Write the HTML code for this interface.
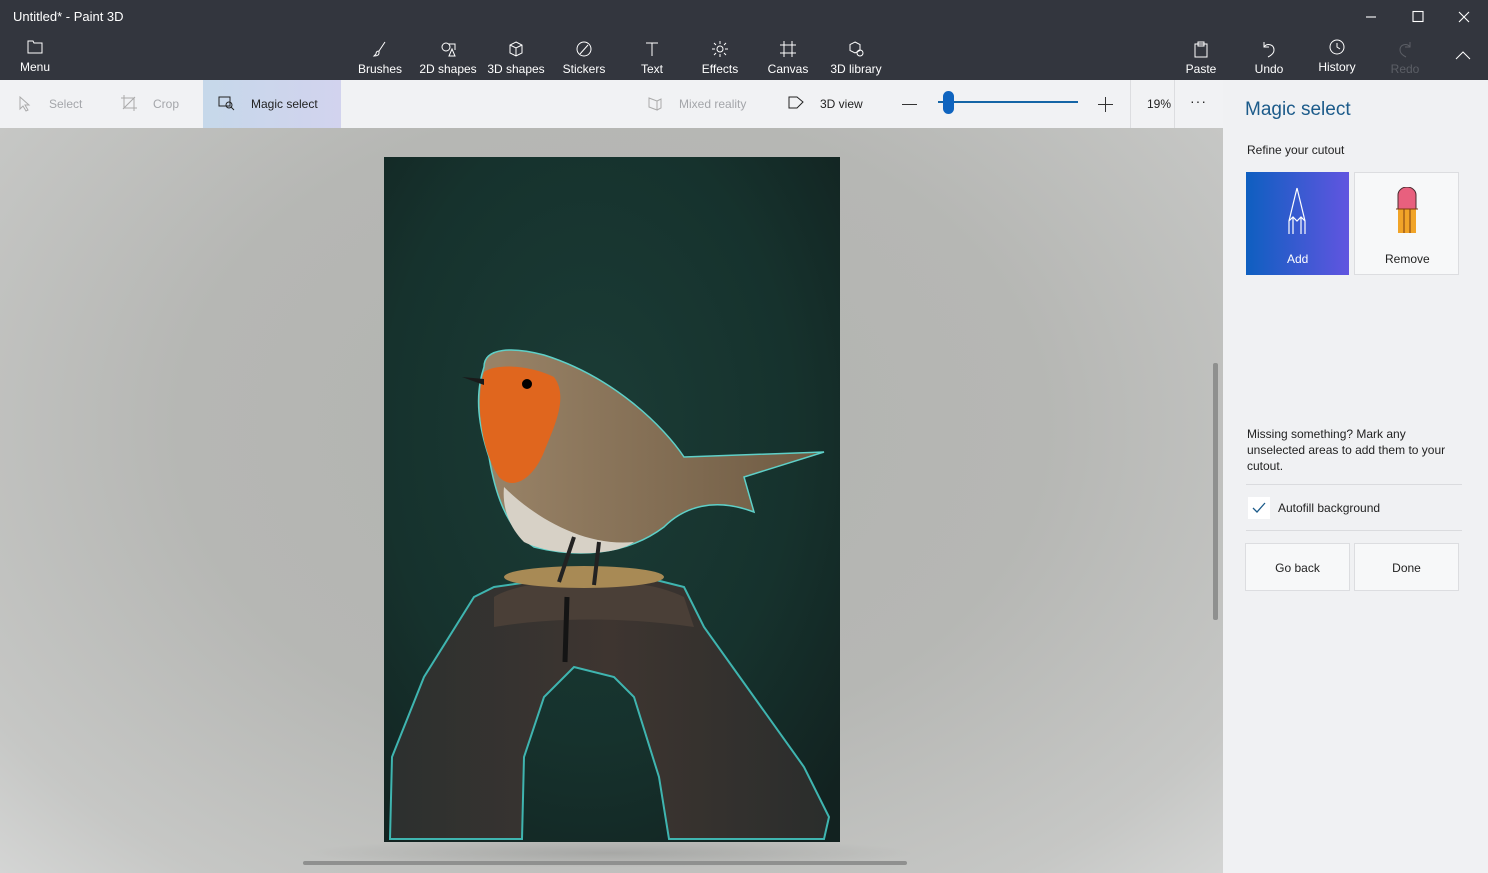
<!DOCTYPE html>
<html><head><meta charset="utf-8"><style>
*{box-sizing:border-box;margin:0;padding:0}
body{width:1488px;height:873px;overflow:hidden;font-family:"Liberation Sans",sans-serif;background:#33363e;position:relative}
.t{position:absolute;color:#fff;font-size:12px}
.tool{position:absolute;top:38px;width:64px;text-align:center;color:#fff;font-size:12px}
.tool svg{display:block;margin:0 auto 4px;width:18px;height:18px}
#bar{position:absolute;left:0;top:80px;width:1223px;height:48px;background:#f1f2f4}
#canvas{position:absolute;left:0;top:128px;width:1223px;height:745px;background:radial-gradient(ellipse at 50% 40%,#b2b3b0 0%,#b6b7b4 50%,#c6c7c5 85%,#d4d5d4 100%)}
#panel{position:absolute;left:1223px;top:80px;width:265px;height:793px;background:#f0f1f3}
.bt{position:absolute;font-size:12px;color:#222}
</style></head><body>
<div class="t" style="left:13px;top:9px;font-size:13px">Untitled* - Paint 3D</div>
<svg style="position:absolute;left:1365px;top:10px" width="110" height="14" stroke="#fff" fill="none" stroke-width="1.1"><path d="M1 7h10"/><rect x="48" y="1.5" width="10" height="10"/><path d="M94 2l10 10M104 2l-10 10"/></svg>
<div class="tool" style="left:3px"><svg viewBox="0 0 18 18" fill="none" stroke="#fff"><path d="M2 3h5l1 2h8v10H2z"/></svg>Menu</div>
<div class="tool" style="left:348px;top:40px"><svg viewBox="0 0 18 18" fill="none" stroke="#fff"><path d="M14 2L8 11M8 11c-2 0-3 1-3 3l-2 2c3 0 5-1 5-3z"/></svg>Brushes</div>
<div class="tool" style="left:416px;top:40px"><svg viewBox="0 0 18 18" fill="none" stroke="#fff"><circle cx="7" cy="7" r="4"/><path d="M9 4h7v6M10 16l3-7 3 7z"/></svg>2D shapes</div>
<div class="tool" style="left:484px;top:40px"><svg viewBox="0 0 18 18" fill="none" stroke="#fff"><path d="M9 2l6 3v8l-6 3-6-3V5zM3 5l6 3 6-3M9 8v8"/></svg>3D shapes</div>
<div class="tool" style="left:552px;top:40px"><svg viewBox="0 0 18 18" fill="none" stroke="#fff"><circle cx="9" cy="9" r="7"/><path d="M5 14l8-9"/></svg>Stickers</div>
<div class="tool" style="left:620px;top:40px"><svg viewBox="0 0 18 18" fill="none" stroke="#fff"><path d="M3 3h12M9 3v13"/></svg>Text</div>
<div class="tool" style="left:688px;top:40px"><svg viewBox="0 0 18 18" fill="none" stroke="#fff"><circle cx="9" cy="9" r="3"/><path d="M9 1v3M9 14v3M1 9h3M14 9h3M3 3l2 2M13 13l2 2M15 3l-2 2M3 15l2-2"/></svg>Effects</div>
<div class="tool" style="left:756px;top:40px"><svg viewBox="0 0 18 18" fill="none" stroke="#fff"><path d="M5 1v16M13 1v16M1 5h16M1 13h16"/></svg>Canvas</div>
<div class="tool" style="left:824px;top:40px"><svg viewBox="0 0 18 18" fill="none" stroke="#fff"><path d="M8 2l5 2.5v6L8 13 3 10.5v-6z"/><circle cx="13" cy="13" r="3"/></svg>3D library</div>
<div class="tool" style="left:1169px;top:40px"><svg viewBox="0 0 18 18" fill="none" stroke="#fff"><rect x="3" y="4" width="12" height="13"/><rect x="6" y="2" width="6" height="4"/></svg>Paste</div>
<div class="tool" style="left:1237px;top:40px"><svg viewBox="0 0 18 18" fill="none" stroke="#fff"><path d="M4 2v5h5M4 7c3-4 10-3 10 3 0 4-4 6-6 7"/></svg>Undo</div>
<div class="tool" style="left:1305px;top:38px"><svg viewBox="0 0 18 18" fill="none" stroke="#fff"><circle cx="9" cy="9" r="7"/><path d="M9 5v4l3 2"/></svg>History</div>
<div class="tool" style="left:1373px;top:40px;color:#5c5f66"><svg viewBox="0 0 18 18" fill="none" stroke="#5c5f66"><path d="M14 2v5H9M14 7c-3-4-10-3-10 3 0 4 4 6 6 7"/></svg>Redo</div>
<svg style="position:absolute;left:1455px;top:50px" width="16" height="10" fill="none" stroke="#fff"><path d="M1 9l7-7 7 7"/></svg>

<div id="bar">
<svg style="position:absolute;left:18px;top:16px" width="14" height="16" fill="none" stroke="#aaa"><path d="M2 1v12l3-3 3 5 2-1-3-5h4z"/></svg>
<div class="bt" style="left:49px;top:17px;color:#a4a6aa">Select</div>
<svg style="position:absolute;left:120px;top:14px" width="18" height="18" fill="none" stroke="#aaa"><path d="M4 1v13h13M1 4h13v13M3 15L15 3"/></svg>
<div class="bt" style="left:153px;top:17px;color:#a4a6aa">Crop</div>
<div style="position:absolute;left:203px;top:0;width:138px;height:48px;background:linear-gradient(90deg,#c6d8ea,#d2d3ee)"></div>
<svg style="position:absolute;left:218px;top:15px" width="18" height="16" fill="none" stroke="#222"><rect x="1" y="2" width="11" height="9"/><circle cx="11" cy="10" r="3"/><path d="M13 12l3 3"/></svg>
<div class="bt" style="left:251px;top:17px">Magic select</div>
<svg style="position:absolute;left:646px;top:16px" width="18" height="16" fill="none" stroke="#aaa"><path d="M3 2l8 3v9l-8-3zM11 5l4-2v9l-4 2"/></svg>
<div class="bt" style="left:679px;top:17px;color:#a4a6aa">Mixed reality</div>
<svg style="position:absolute;left:787px;top:15px" width="18" height="16" fill="none" stroke="#222"><path d="M2 2h8l6 5-6 6H2z"/></svg>
<div class="bt" style="left:820px;top:17px">3D view</div>
<div style="position:absolute;left:902px;top:24px;width:15px;height:1px;background:#333"></div>
<div style="position:absolute;left:938px;top:21px;width:140px;height:2px;background:#1565a6"></div>
<div style="position:absolute;left:943px;top:11px;width:11px;height:23px;border-radius:6px;background:#0f64bf"></div>
<div style="position:absolute;left:1098px;top:24px;width:15px;height:1px;background:#333"></div>
<div style="position:absolute;left:1105px;top:17px;width:1px;height:15px;background:#333"></div>
<div style="position:absolute;left:1130px;top:0;width:45px;height:48px;border-left:1px solid #dcdde0;border-right:1px solid #dcdde0"></div>
<div class="bt" style="left:1147px;top:17px">19%</div>
<div class="bt" style="left:1190px;top:13px;font-size:14px;letter-spacing:1px">···</div>
</div>

<div id="canvas">
<div style="position:absolute;left:300px;top:710px;width:620px;height:30px;background:radial-gradient(ellipse,rgba(0,0,0,.12),rgba(0,0,0,0) 70%)"></div>
<svg style="position:absolute;left:384px;top:29px" width="456" height="685" viewBox="0 0 456 685">
<defs><radialGradient id="bg" cx="45%" cy="40%" r="75%"><stop offset="0" stop-color="#1b3c36"/><stop offset=".6" stop-color="#16322d"/><stop offset="1" stop-color="#122220"/></radialGradient>
<linearGradient id="body" x1="0" x2="1"><stop offset="0" stop-color="#9a8468"/><stop offset="1" stop-color="#6e5a42"/></linearGradient>
<linearGradient id="rock" x1="0" x2="1"><stop offset="0" stop-color="#2c302f"/><stop offset=".5" stop-color="#3e3530"/><stop offset="1" stop-color="#2a2d2c"/></linearGradient></defs>
<rect width="456" height="685" fill="url(#bg)"/>
<path d="M8 600 L40 520 L90 440 L110 430 L180 420 L260 420 L300 430 L320 470 L370 540 L420 610 L445 660 L440 682 L285 682 L275 620 L250 540 L230 520 L190 510 L160 540 L140 600 L138 682 L6 682 Z" fill="url(#rock)" stroke="#3fb5b0" stroke-width="2"/>
<path d="M110 440 C140 420 250 415 300 440 L310 470 C240 460 170 460 110 470Z" fill="#4a3f37"/>
<path d="M183 440 L181 505" stroke="#141414" stroke-width="5"/>
<ellipse cx="200" cy="420" rx="80" ry="11" fill="#a88a55"/>
<path d="M100 210 C100 190 130 190 160 198 C230 220 280 270 300 300 L440 295 L360 320 L370 355 C330 340 300 350 280 370 C240 400 190 400 150 390 C120 370 110 330 105 300 C95 270 90 240 100 210Z" fill="url(#body)" stroke="#5fd0c8" stroke-width="1.5"/>
<path d="M100 215 C92 240 95 290 115 320 C130 335 150 320 160 295 C170 270 185 240 170 220 C150 210 115 205 100 215Z" fill="#e0661e"/>
<path d="M120 330 C150 360 200 390 250 385 C230 400 170 400 140 385 C125 370 118 350 120 330Z" fill="#d7d1c6"/>
<circle cx="143" cy="227" r="5" fill="#000"/>
<path d="M100 222 L78 220 L100 228Z" fill="#1a1a1a"/>
<path d="M190 380 L175 425 M215 385 L210 428" stroke="#222" stroke-width="4"/>
</svg>
<div style="position:absolute;left:1213px;top:235px;width:5px;height:257px;background:#8f908f;border-radius:2px"></div>
<div style="position:absolute;left:303px;top:733px;width:604px;height:4px;background:#8f908f;border-radius:2px"></div>
</div>

<div id="panel">
<div style="position:absolute;left:22px;top:19px;font-size:19px;color:#1c5b8a">Magic select</div>
<div class="bt" style="left:24px;top:63px">Refine your cutout</div>
<div style="position:absolute;left:23px;top:92px;width:103px;height:103px;background:linear-gradient(90deg,#0e5fc0,#6155e0)"></div>
<svg style="position:absolute;left:63px;top:106px" width="22" height="50" fill="none" stroke="#fff" stroke-width="1.2"><path d="M11 2L3 35v13M11 2l8 33v13M3 35l4-4 4 4 4-4 4 4M7 31v17M15 31v17"/></svg>
<div class="bt" style="left:64px;top:172px;color:#fff">Add</div>
<div style="position:absolute;left:131px;top:92px;width:105px;height:103px;background:#f7f8f9;border:1px solid #dcdde0"></div>
<svg style="position:absolute;left:172px;top:107px" width="24" height="48"><path d="M3 8a9 8 0 0 1 18 0v14H3z" fill="#e8607e" stroke="#4a2b30"/><rect x="3" y="22" width="18" height="24" fill="#f1a428"/><path d="M1 22h22M9 22v24M15 22v24" stroke="#7a3b10"/></svg>
<div class="bt" style="left:162px;top:172px">Remove</div>
<div class="bt" style="left:24px;top:346px;width:210px;line-height:16px">Missing something? Mark any unselected areas to add them to your cutout.</div>
<div style="position:absolute;left:23px;top:404px;width:216px;height:1px;background:#dadbde"></div>
<div style="position:absolute;left:25px;top:417px;width:22px;height:22px;background:#fff"></div>
<svg style="position:absolute;left:29px;top:421px" width="14" height="14" fill="none" stroke="#1c5b8a" stroke-width="1.3"><path d="M1 7l4 4 8-9"/></svg>
<div class="bt" style="left:55px;top:421px">Autofill background</div>
<div style="position:absolute;left:23px;top:450px;width:216px;height:1px;background:#dadbde"></div>
<div style="position:absolute;left:22px;top:463px;width:105px;height:48px;background:#f7f8f9;border:1px solid #dcdde0;font-size:12px;color:#222;text-align:center;line-height:48px">Go back</div>
<div style="position:absolute;left:131px;top:463px;width:105px;height:48px;background:#f7f8f9;border:1px solid #dcdde0;font-size:12px;color:#222;text-align:center;line-height:48px">Done</div>
</div>
</body></html>
